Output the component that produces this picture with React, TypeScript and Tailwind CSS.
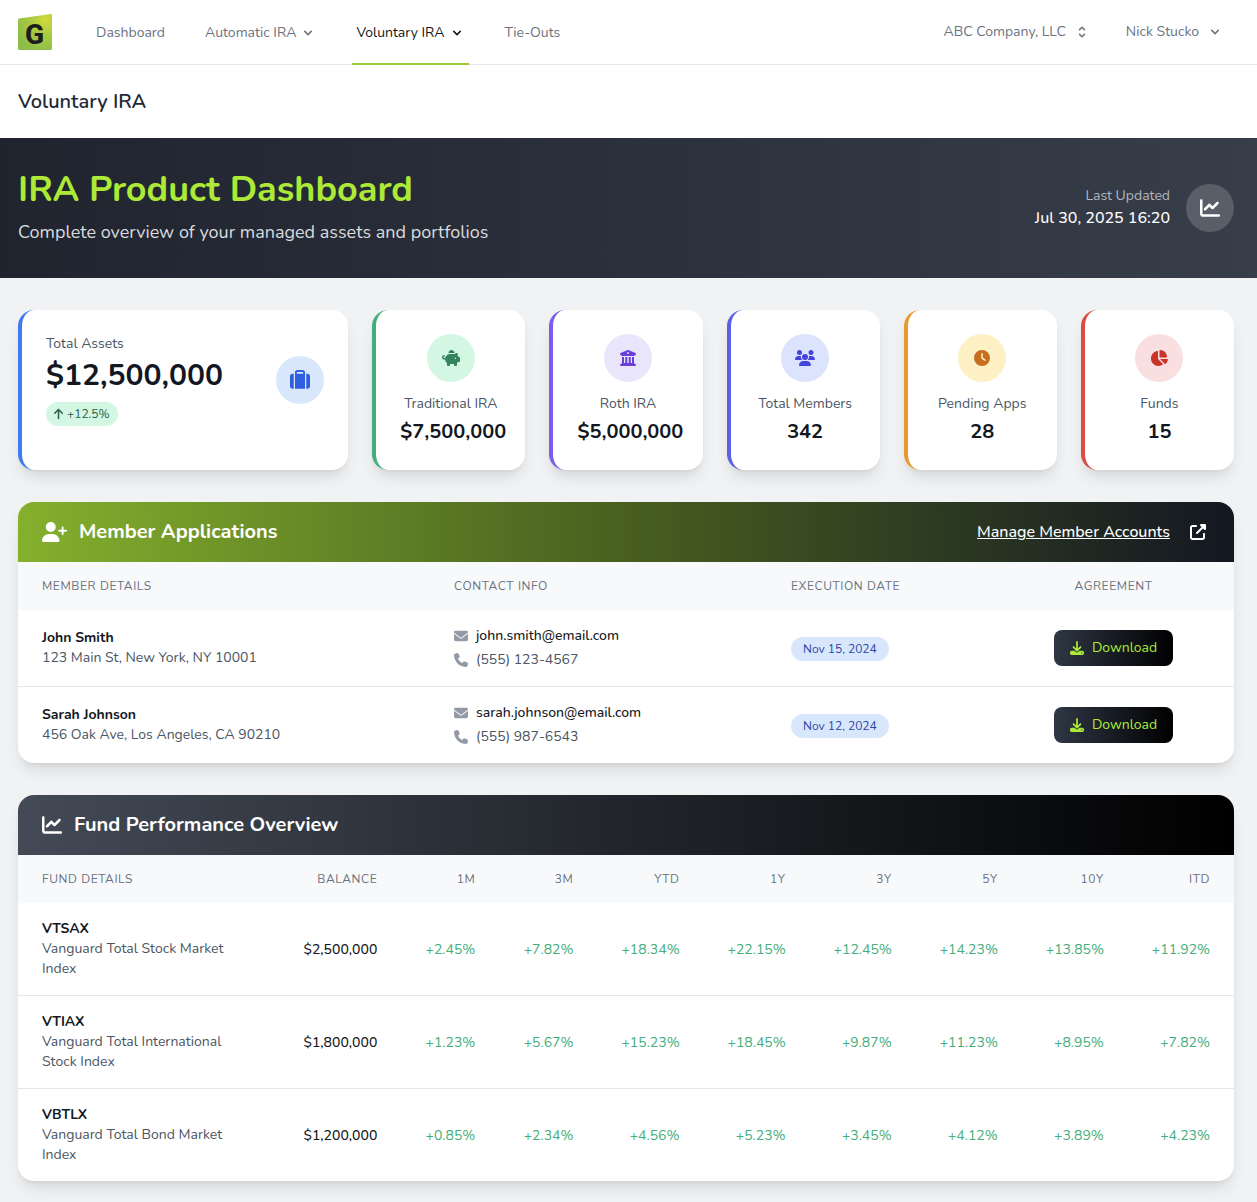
import type { ComponentType, ReactNode } from "react";
import {
  FaArrowUp,
  FaBuildingColumns,
  FaChartLine,
  FaChartPie,
  FaClock,
  FaDownload,
  FaEnvelope,
  FaPhone,
  FaPiggyBank,
  FaSuitcase,
  FaUpRightFromSquare,
  FaUserPlus,
  FaUsers,
} from "react-icons/fa6";

function Logo() {
  return (
    <svg viewBox="0 0 34 36" className="h-9 w-[34px]" role="img" aria-label="G">
      <defs>
        <radialGradient id="logo-fill" cx="0.82" cy="0.15" r="0.95">
          <stop offset="0" stopColor="#d3d93c" />
          <stop offset="0.45" stopColor="#aacb42" />
          <stop offset="1" stopColor="#8cbd49" />
        </radialGradient>
      </defs>
      <path
        d="M1.2 4.6 32.6.1Q34 0 34 1.3V34.5Q34 36 32.5 36H1.5Q0 36 0 34.5V6Q0 4.8 1.2 4.6Z"
        fill="url(#logo-fill)"
      />
      <text
        x="16.5"
        y="30"
        textAnchor="middle"
        fontFamily="'Liberation Sans Narrow', Roboto, sans-serif"
        fontWeight="800"
        fontSize="28"
        fill="#1d1d1b"
      >
        G
      </text>
    </svg>
  );
}

function ChevronDown() {
  return (
    <svg viewBox="0 0 20 20" fill="currentColor" className="size-4" aria-hidden="true">
      <path
        fillRule="evenodd"
        d="M5.293 7.293a1 1 0 011.414 0L10 10.586l3.293-3.293a1 1 0 111.414 1.414l-4 4a1 1 0 01-1.414 0l-4-4a1 1 0 010-1.414z"
        clipRule="evenodd"
      />
    </svg>
  );
}

function Selector() {
  return (
    <svg viewBox="0 0 20 20" fill="currentColor" className="size-4" aria-hidden="true">
      <path
        fillRule="evenodd"
        d="M10 3a1 1 0 01.707.293l3 3a1 1 0 01-1.414 1.414L10 5.414 7.707 7.707a1 1 0 01-1.414-1.414l3-3A1 1 0 0110 3zm-3.707 9.293a1 1 0 011.414 0L10 14.586l2.293-2.293a1 1 0 011.414 1.414l-3 3a1 1 0 01-1.414 0l-3-3a1 1 0 010-1.414z"
        clipRule="evenodd"
      />
    </svg>
  );
}

type StatProps = {
  label: string;
  value: string;
  border: string;
  circle: string;
  Icon: ComponentType<{ className?: string }>;
  iconSize: string;
};

const stats: StatProps[] = [
  { label: "Traditional IRA", value: "$7,500,000", border: "border-[#44ae7b]", circle: "bg-[#d4f7e3] text-[#358460]", Icon: FaPiggyBank, iconSize: "h-4 w-[18px]" },
  { label: "Roth IRA", value: "$5,000,000", border: "border-[#7c5ceb]", circle: "bg-[#e9e5fb] text-[#683fdc]", Icon: FaBuildingColumns, iconSize: "size-4" },
  { label: "Total Members", value: "342", border: "border-[#5b61e8]", circle: "bg-[#dce3fd] text-[#4744dc]", Icon: FaUsers, iconSize: "h-4 w-5" },
  { label: "Pending Apps", value: "28", border: "border-[#e8992f]", circle: "bg-[#fcf0c4] text-[#c86e20]", Icon: FaClock, iconSize: "size-4" },
  { label: "Funds", value: "15", border: "border-[#dd4b44]", circle: "bg-[#f9dfdf] text-[#c93328]", Icon: FaChartPie, iconSize: "h-4 w-[18px]" },
];

function StatCard({ label, value, border, circle, Icon, iconSize }: StatProps) {
  return (
    <div className={`min-w-0 rounded-2xl border-l-4 bg-white p-6 text-center shadow-lg ${border}`}>
      <div className={`mx-auto flex size-12 items-center justify-center rounded-full ${circle}`}>
        <Icon className={iconSize} />
      </div>
      <p className="mt-3 text-sm whitespace-nowrap text-[#4b5563]">{label}</p>
      <p className="mt-1 text-xl font-bold text-[#131722]">{value}</p>
    </div>
  );
}

const members = [
  { name: "John Smith", address: "123 Main St, New York, NY 10001", email: "john.smith@email.com", phone: "(555) 123-4567", date: "Nov 15, 2024" },
  { name: "Sarah Johnson", address: "456 Oak Ave, Los Angeles, CA 90210", email: "sarah.johnson@email.com", phone: "(555) 987-6543", date: "Nov 12, 2024" },
];

const periods = ["1M", "3M", "YTD", "1Y", "3Y", "5Y", "10Y", "ITD"];

const funds = [
  { ticker: "VTSAX", name: "Vanguard Total Stock Market Index", balance: "$2,500,000", returns: ["+2.45%", "+7.82%", "+18.34%", "+22.15%", "+12.45%", "+14.23%", "+13.85%", "+11.92%"] },
  { ticker: "VTIAX", name: "Vanguard Total International Stock Index", balance: "$1,800,000", returns: ["+1.23%", "+5.67%", "+15.23%", "+18.45%", "+9.87%", "+11.23%", "+8.95%", "+7.82%"] },
  { ticker: "VBTLX", name: "Vanguard Total Bond Market Index", balance: "$1,200,000", returns: ["+0.85%", "+2.34%", "+4.56%", "+5.23%", "+3.45%", "+4.12%", "+3.89%", "+4.23%"] },
];

function Th({ children, align = "text-left" }: { children: ReactNode; align?: string }) {
  return (
    <th scope="col" className={`px-6 py-4 text-xs font-normal tracking-wider uppercase ${align}`}>
      {children}
    </th>
  );
}

export default function App() {
  return (
    <div className="min-h-screen bg-[#f0f2f4] pb-5 font-['Nunito','Open_Sans',sans-serif] text-[#131722]">
      <header className="flex h-[65px] items-center justify-between border-b border-[#e5e7eb] bg-white pr-[34px] pl-[18px] text-sm text-[#6b7280]">
        <div className="flex items-center gap-10">
          <Logo />
          <nav className="flex h-[65px] gap-8">
            <a href="#dashboard" className="flex items-center border-b-2 border-transparent px-1 pt-1">
              Dashboard
            </a>
            <button type="button" className="flex items-center gap-1 border-b-2 border-transparent px-1 pt-1">
              Automatic IRA
              <ChevronDown />
            </button>
            <button type="button" className="flex items-center gap-1 border-b-2 border-[#9aca3c] px-1 pt-1 text-[#131722]">
              Voluntary IRA
              <ChevronDown />
            </button>
            <a href="#tie-outs" className="flex items-center border-b-2 border-transparent px-1 pt-1">
              Tie-Outs
            </a>
          </nav>
        </div>
        <div className="flex items-center gap-9">
          <button type="button" className="flex items-center gap-2">
            ABC Company, LLC
            <Selector />
          </button>
          <button type="button" className="flex items-center gap-2">
            Nick Stucko
            <ChevronDown />
          </button>
        </div>
      </header>

      <div className="bg-white px-[18px] pt-[25px] pb-6">
        <h2 className="text-xl leading-6 font-semibold text-[#1f2937]">Voluntary IRA</h2>
      </div>

      <section className="flex items-center justify-between bg-linear-to-r/srgb from-[#1f242f] to-[#373d49] py-8 pr-[23px] pl-[18px]">
        <div>
          <h1 className="text-4xl font-bold text-[#adea38]">IRA Product Dashboard</h1>
          <p className="mt-2 text-lg leading-7 text-[#d9dbde]">Complete overview of your managed assets and portfolios</p>
        </div>
        <div className="flex items-center gap-4">
          <div className="text-right">
            <p className="text-sm text-[#b3b6bb]">Last Updated</p>
            <p className="text-base font-medium text-white">Jul 30, 2025 16:20</p>
          </div>
          <div className="flex size-12 items-center justify-center rounded-full bg-[#595f69] text-white">
            <FaChartLine className="size-5" />
          </div>
        </div>
      </section>

      <main className="flex flex-col gap-8 pt-8 pr-[23px] pl-[18px]">
        <section className="grid grid-cols-7 gap-6">
          <div className="col-span-2 rounded-2xl border-l-4 border-[#417cee] bg-white p-6 shadow-lg">
            <div className="flex items-center justify-between">
              <div>
                <p className="text-sm text-[#4b5563]">Total Assets</p>
                <p className="mt-1 text-3xl leading-9 font-bold">$12,500,000</p>
                <p className="mt-2 flex w-fit items-center gap-1 rounded-full bg-[#d4f7e3] px-2 py-1 text-xs text-[#285d47]">
                  <FaArrowUp className="h-3 w-[9px]" />
                  +12.5%
                </p>
              </div>
              <div className="flex size-12 items-center justify-center rounded-full bg-[#d9e7fd] text-[#2f5fe0]">
                <FaSuitcase className="size-5" />
              </div>
            </div>
          </div>
          {stats.map((s) => (
            <StatCard key={s.label} {...s} />
          ))}
        </section>

        <section className="overflow-hidden rounded-2xl bg-white shadow-lg">
          <div className="flex items-center justify-between bg-linear-to-r/srgb from-[#84b02d] via-[#485f20] to-[#131722] px-6 py-4 text-white">
            <h3 className="flex items-center gap-3 text-xl font-bold">
              <FaUserPlus className="h-5 w-[25px]" />
              Member Applications
            </h3>
            <a href="#members" className="mr-1 flex items-center gap-5 text-base font-medium">
              <span className="underline">Manage Member Accounts</span>
              <FaUpRightFromSquare className="size-4" />
            </a>
          </div>
          <table className="w-full table-fixed">
            <colgroup>
              <col className="w-[412px]" />
              <col className="w-[337px]" />
              <col className="w-[226px]" />
              <col className="w-[241px]" />
            </colgroup>
            <thead className="bg-[#f8f9fb] text-[#6b7280]">
              <tr>
                <Th>Member Details</Th>
                <Th>Contact Info</Th>
                <Th>Execution Date</Th>
                <Th align="text-center">Agreement</Th>
              </tr>
            </thead>
            <tbody className="divide-y divide-[#e5e7eb] text-sm">
              {members.map((m) => (
                <tr key={m.name}>
                  <td className="px-6 py-4">
                    <p className="font-bold">{m.name}</p>
                    <p className="text-[#4b5563]">{m.address}</p>
                  </td>
                  <td className="px-6 py-4">
                    <p className="flex items-center gap-2 font-medium">
                      <FaEnvelope className="size-[14px] text-[#9399a6]" />
                      {m.email}
                    </p>
                    <p className="mt-1 flex items-center gap-2 text-[#4b5563]">
                      <FaPhone className="size-[14px] text-[#9399a6]" />
                      {m.phone}
                    </p>
                  </td>
                  <td className="px-6 py-4 text-base">
                    <span className="inline-flex rounded-full bg-[#d9e7fd] px-3 py-1 text-xs text-[#2a44a8]">{m.date}</span>
                  </td>
                  <td className="px-6 py-4 text-center">
                    <button
                      type="button"
                      className="inline-flex items-center gap-2 rounded-lg bg-linear-to-r/srgb from-[#2f3745] to-black px-4 py-2 align-middle text-[#adea38]"
                    >
                      <FaDownload className="size-[14px]" />
                      Download
                    </button>
                  </td>
                </tr>
              ))}
            </tbody>
          </table>
        </section>

        <section className="overflow-hidden rounded-2xl bg-white shadow-lg">
          <div className="bg-linear-to-r/srgb from-[#434a56] to-black px-6 py-4 text-white">
            <h3 className="flex items-center gap-3 text-xl font-bold">
              <FaChartLine className="size-5" />
              Fund Performance Overview
            </h3>
          </div>
          <table className="w-full table-fixed">
            <colgroup>
              <col className="w-[261px]" />
              <col className="w-[122px]" />
              <col className="w-[98px]" />
              <col className="w-[98px]" />
              <col className="w-[106px]" span={6} />
            </colgroup>
            <thead className="bg-[#f8f9fb] text-[#6b7280]">
              <tr>
                <Th>Fund Details</Th>
                <Th align="text-right">Balance</Th>
                {periods.map((p) => (
                  <Th key={p} align="text-right">
                    {p}
                  </Th>
                ))}
              </tr>
            </thead>
            <tbody className="divide-y divide-[#e5e7eb]">
              {funds.map((f) => (
                <tr key={f.ticker}>
                  <td className="px-6 py-4 text-sm">
                    <p className="font-bold">{f.ticker}</p>
                    <p className="text-[#4b5563]">{f.name}</p>
                  </td>
                  <td className="px-6 py-4 text-right">
                    <span className="text-sm font-medium">{f.balance}</span>
                  </td>
                  {f.returns.map((r, i) => (
                    <td key={periods[i]} className="px-6 py-4 text-right">
                      <span className="text-sm text-[#44ae7b]">{r}</span>
                    </td>
                  ))}
                </tr>
              ))}
            </tbody>
          </table>
        </section>
      </main>
    </div>
  );
}
